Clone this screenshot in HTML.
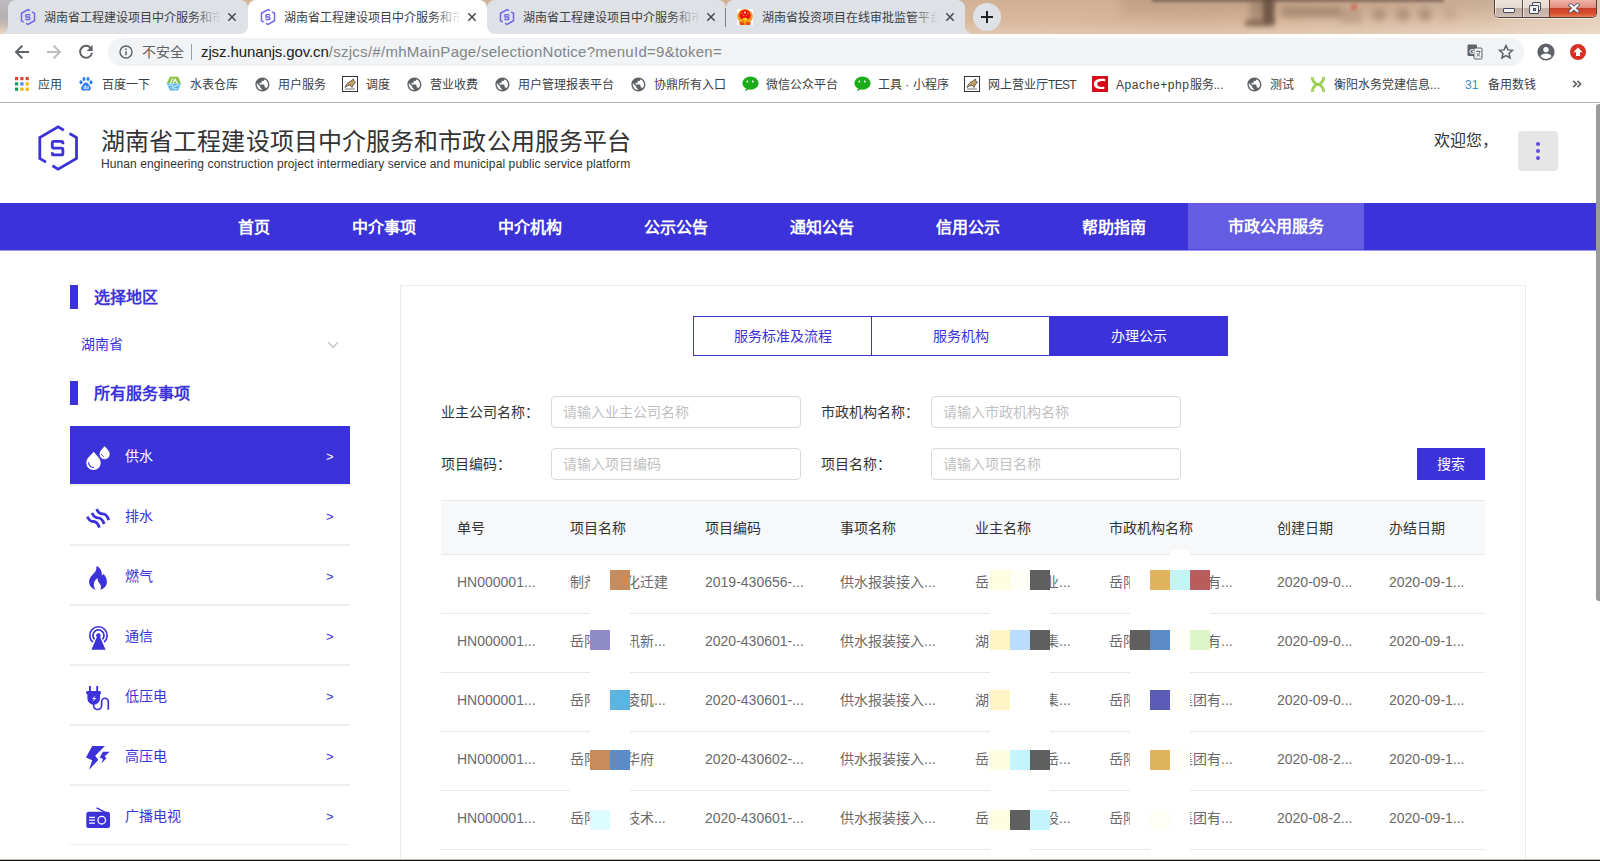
<!DOCTYPE html>
<html lang="zh-CN">
<head>
<meta charset="utf-8">
<title>湖南省工程建设项目中介服务和市政公用服务平台</title>
<style>
*{box-sizing:border-box;margin:0;padding:0}
html,body{width:1600px;height:861px;overflow:hidden;background:#fff}
body{font-family:"Liberation Sans",sans-serif;font-size:14px;color:#333;position:relative}
.abs{position:absolute}
.t{position:absolute;white-space:nowrap;line-height:20px;height:20px}
/* ---------- browser chrome ---------- */
#tabstrip{position:absolute;left:0;top:0;width:1600px;height:34px;background:linear-gradient(90deg,#b9b2ae 0,#cdb9a8 14px,#dcbfa6 60px,#d9b89c 400px,#d8b79b 1000px,#d6b498 1200px,#dcbda3 1400px,#e6cfba 1600px);overflow:hidden}
#tabstrip:before{content:'';position:absolute;left:0;top:0;width:1600px;height:34px;background:linear-gradient(180deg,rgba(0,0,0,.03),rgba(255,255,255,0) 55%,rgba(255,255,255,.22))}
.tab{position:absolute;top:0;height:34px;background:#dee1e6;border-radius:8px 8px 0 0}
.tab.on{background:#fff}
.tab .tt{position:absolute;left:36px;top:8px;line-height:20px;font-size:12px;color:#3c4043;white-space:nowrap;width:178px;overflow:hidden}
.tab .fade{position:absolute;left:184px;top:4px;width:32px;height:26px;background:linear-gradient(90deg,rgba(222,225,230,0),#dee1e6 90%)}
.tab.on .fade{background:linear-gradient(90deg,rgba(255,255,255,0),#fff 90%)}
.tab svg.fav{position:absolute;left:12px;top:8px}
.tab svg.x{position:absolute;left:218px;top:11px}
#toolbar{position:absolute;left:0;top:34px;width:1600px;height:34px;background:#fff}
#omni{position:absolute;left:108px;top:4px;width:1416px;height:28px;border-radius:14px;background:#f1f3f4}
#bm{position:absolute;left:0;top:68px;width:1600px;height:34px;background:#fff}
#bm .b{position:absolute;top:7px;line-height:20px;font-size:12px;color:#3c4043;white-space:nowrap}
#bm svg{position:absolute;top:8px}
#chromeline{position:absolute;left:0;top:102px;width:1600px;height:1px;background:#b6b6b6}
/* ---------- page ---------- */
#page{position:absolute;left:0;top:103px;width:1596px;height:756px;background:#fff;overflow:hidden}
#sbar{position:absolute;left:1596px;top:104px;width:8px;height:496.5px;background:#9b9b9b;border-radius:3px}
#bottom{position:absolute;left:0;top:859px;width:1600px;height:1px;background:#cbbdb2}
#bottom2{position:absolute;left:0;top:860px;width:1600px;height:1px;background:#120d0a}
#nav{position:absolute;left:0;top:100px;width:1596px;height:48px;background:#3b32d9;overflow:hidden}
#nav .n{position:absolute;top:0;height:48px;line-height:50px;text-align:center;color:#fff;font-size:16px;font-weight:bold;white-space:nowrap}
#nav .n.on{background:#655de1;height:46px;line-height:48px}
.bar{position:absolute;left:70px;width:8px;height:24px;background:#3b32d9}
.h{position:absolute;left:94px;font-size:16px;font-weight:bold;color:#3b32d9;line-height:24px;margin-top:1px;white-space:nowrap}
.it{position:absolute;left:70px;width:280px;height:60px;border-bottom:2px solid #eee;color:#3b32d9}
.it.on{background:#3b32d9;color:#fff;border-bottom:2px solid #f1f1ec}
.it .l{position:absolute;left:55px;top:20px;line-height:20px;font-size:14px;white-space:nowrap}
.it .g{position:absolute;left:256px;top:21px;line-height:20px;font-size:13px}
.it svg{position:absolute;left:14px;top:17px}
#panel{position:absolute;left:400px;top:182px;width:1126px;height:700px;border:1px solid #ededed;background:#fff}
.tb{position:absolute;top:213px;height:40px;border:1px solid #3b32d9;color:#3b32d9;font-size:14px;line-height:38px;text-align:center;background:#fff}
.tb.on{background:#3b32d9;color:#fff}
.lb{position:absolute;line-height:20px;font-size:14px;color:#333;white-space:nowrap}
.in{position:absolute;width:250px;height:32px;border:1px solid #d9d9d9;border-radius:4px;background:#fff;color:#bfbfbf;font-size:14px;line-height:30px;padding-left:11px;white-space:nowrap}
#btn{position:absolute;left:1417px;top:345px;width:68px;height:32px;background:#3b32d9;color:#fff;font-size:14px;line-height:32px;text-align:center}
#thead{position:absolute;left:441px;top:397px;width:1044px;height:55px;background:#f7f8fa;border-top:1px solid #e8e8e8;border-bottom:1px solid #e8e8e8}
.th{position:absolute;top:415px;line-height:20px;font-size:14px;color:#333;white-space:nowrap}
.row{position:absolute;left:441px;width:1044px;height:59px;border-bottom:1px solid #e8e8e8}
.td{position:absolute;line-height:20px;font-size:14px;color:#6a6a6a;white-space:nowrap}
.m{position:absolute;width:20px;height:20px}
</style>
</head>
<body>
<div id="tabstrip">
<div class="abs" style="left:1120px;top:-6px;width:380px;height:30px;background:linear-gradient(180deg,rgba(130,98,76,.26),rgba(130,98,76,.12) 60%,rgba(130,98,76,0));filter:blur(6px)"></div>
<div class="abs" style="left:1152px;top:-2.5px;width:292px;height:4.5px;background:#5e4a3f;filter:blur(1.5px);opacity:.62"></div>
<div class="abs" style="left:1250px;top:-3px;width:24px;height:27px;background:#7a5f4c;filter:blur(3px);opacity:.4"></div>
<div class="abs" style="left:1263px;top:-3px;width:11px;height:26px;background:#5f4838;filter:blur(2px);opacity:.75"></div>
<div class="abs" style="left:1245px;top:20px;width:29px;height:6px;background:#6e5542;filter:blur(2.5px);opacity:.7"></div>
<div class="abs" style="left:1282px;top:7px;width:60px;height:10px;background:#856a59;filter:blur(3px);opacity:.5"></div>
<div class="abs" style="left:1340px;top:9px;width:22px;height:14px;background:#a08573;filter:blur(3px);opacity:.4"></div>
<div class="abs" style="left:1372px;top:8px;width:14px;height:13px;border-radius:7px;background:#8f7462;filter:blur(3px);opacity:.5"></div>
<div class="abs" style="left:1396px;top:8px;width:14px;height:13px;border-radius:7px;background:#8f7462;filter:blur(3px);opacity:.5"></div>
<div class="abs" style="left:1418px;top:8px;width:14px;height:13px;border-radius:7px;background:#8f7462;filter:blur(3px);opacity:.5"></div>
<div class="abs" style="left:1444px;top:8px;width:12px;height:12px;background:#a58a78;filter:blur(3px);opacity:.3"></div>
<div class="abs" style="left:1351px;top:4px;width:6px;height:6px;background:#d0604e;filter:blur(1.6px);opacity:.65"></div>
<div class="abs" style="left:0;top:0;width:12px;height:34px;background:linear-gradient(180deg,#bdbabd,#b6b1b3 50%,#c6bab3 72%,#ecd6c3 100%)"></div>
<div class="abs" style="left:0;top:26px;width:8px;height:8px;background:radial-gradient(circle at 0 0,rgba(222,225,230,0) 7.6px,#dee1e6 8.3px)"></div>
<div class="abs" style="left:965px;top:26px;width:8px;height:8px;background:radial-gradient(circle at 100% 0,rgba(222,225,230,0) 7.6px,#dee1e6 8.3px)"></div>
<div class="abs" style="left:238px;top:24px;width:260px;height:10px;background:#fff"></div>
<div class="tab" style="left:8px;width:240px;border-radius:8px 8px 8px 0"><svg class="fav" width="16" height="18" viewBox="35.65 122.7 45 50.6"><path d="M63.84 130.17L58.15 126.9L39.8 137.45L39.8 158.55L46.04 162.14M52.46 165.83L58.15 169.1L76.5 158.55L76.5 137.45L69.53 133.44" fill="none" stroke="#6f67e8" stroke-width="4.2"/><path d="M62.9 144.2V142.9a1.5 1.5 0 0 0-1.5-1.5H53.8a1.5 1.5 0 0 0-1.5 1.5V146.7a1.5 1.5 0 0 0 1.5 1.5H61.4a1.5 1.5 0 0 1 1.5 1.5V153.4a1.5 1.5 0 0 1-1.5 1.5H53.8a1.5 1.5 0 0 1-1.5-1.5V152.2" fill="none" stroke="#6f67e8" stroke-width="4"/></svg><div class="tt">湖南省工程建设项目中介服务和市政公用服务平台</div><div class="fade"></div><svg class="x" width="12" height="12" viewBox="0 0 12 12"><path d="M2.3 2.3l7.4 7.4M9.7 2.3l-7.4 7.4" stroke="#45494d" stroke-width="1.5" fill="none"/></svg></div>
<div class="tab on" style="left:248px;width:239px"><svg class="fav" width="16" height="18" viewBox="35.65 122.7 45 50.6"><path d="M63.84 130.17L58.15 126.9L39.8 137.45L39.8 158.55L46.04 162.14M52.46 165.83L58.15 169.1L76.5 158.55L76.5 137.45L69.53 133.44" fill="none" stroke="#6f67e8" stroke-width="4.2"/><path d="M62.9 144.2V142.9a1.5 1.5 0 0 0-1.5-1.5H53.8a1.5 1.5 0 0 0-1.5 1.5V146.7a1.5 1.5 0 0 0 1.5 1.5H61.4a1.5 1.5 0 0 1 1.5 1.5V153.4a1.5 1.5 0 0 1-1.5 1.5H53.8a1.5 1.5 0 0 1-1.5-1.5V152.2" fill="none" stroke="#6f67e8" stroke-width="4"/></svg><div class="tt">湖南省工程建设项目中介服务和市政公用服务平台</div><div class="fade"></div><svg class="x" width="12" height="12" viewBox="0 0 12 12"><path d="M2.3 2.3l7.4 7.4M9.7 2.3l-7.4 7.4" stroke="#45494d" stroke-width="1.5" fill="none"/></svg></div>
<div class="tab" style="left:487px;width:239px;border-radius:8px 8px 0 8px"><svg class="fav" width="16" height="18" viewBox="35.65 122.7 45 50.6"><path d="M63.84 130.17L58.15 126.9L39.8 137.45L39.8 158.55L46.04 162.14M52.46 165.83L58.15 169.1L76.5 158.55L76.5 137.45L69.53 133.44" fill="none" stroke="#6f67e8" stroke-width="4.2"/><path d="M62.9 144.2V142.9a1.5 1.5 0 0 0-1.5-1.5H53.8a1.5 1.5 0 0 0-1.5 1.5V146.7a1.5 1.5 0 0 0 1.5 1.5H61.4a1.5 1.5 0 0 1 1.5 1.5V153.4a1.5 1.5 0 0 1-1.5 1.5H53.8a1.5 1.5 0 0 1-1.5-1.5V152.2" fill="none" stroke="#6f67e8" stroke-width="4"/></svg><div class="tt">湖南省工程建设项目中介服务和市政公用服务平台</div><div class="fade"></div><svg class="x" width="12" height="12" viewBox="0 0 12 12"><path d="M2.3 2.3l7.4 7.4M9.7 2.3l-7.4 7.4" stroke="#45494d" stroke-width="1.5" fill="none"/></svg></div>
<div class="tab" style="left:726px;width:239px"><svg class="fav" style="left:11px;top:9px" width="16" height="16" viewBox="0 0 16 16"><rect width="16" height="16" fill="#fff"/><ellipse cx="8" cy="7.4" rx="7.8" ry="7.4" fill="#f4981c"/><circle cx="8" cy="6.3" r="5.5" fill="#f20d0d"/><circle cx="8" cy="3.5" r="1.05" fill="#ffe98a"/><circle cx="4.9" cy="4.7" r=".6" fill="#f6b85a"/><circle cx="11.1" cy="4.7" r=".6" fill="#f6b85a"/><circle cx="6.7" cy="6.5" r=".55" fill="#f6c04a"/><circle cx="9.3" cy="6.5" r=".55" fill="#f6c04a"/><path d="M2.6 8.5C4.5 11 6 10 8 9.3c2 .7 3.5 1.7 5.4-.8 1 2.5-.4 5-1.4 5.5H4C3 14 1.6 11 2.6 8.5z" fill="#f6a21a"/><ellipse cx="8" cy="10.1" rx="2.2" ry="1.3" fill="#f9d616"/><path d="M2.2 13.2C5 12.3 6.5 14 8 13.4c1.5.6 3-1.1 5.8-.2L13 16H3z" fill="#e94a12"/><path d="M7.2 11.5h1.6V16H7.2z" fill="#f5a314"/><rect x="5.6" y="11.4" width="1.2" height="1.2" fill="#ea5a14"/><rect x="9.2" y="11.6" width="1.3" height=".9" fill="#ea5a14"/></svg><div class="tt">湖南省投资项目在线审批监管平台</div><div class="fade"></div><svg class="x" width="12" height="12" viewBox="0 0 12 12"><path d="M2.3 2.3l7.4 7.4M9.7 2.3l-7.4 7.4" stroke="#45494d" stroke-width="1.5" fill="none"/></svg></div>
<div class="abs" style="left:725px;top:8px;width:1px;height:19px;background:#7d8187"></div>
<div class="abs" style="left:973px;top:3px;width:28px;height:28px;border-radius:14px;background:#dee1e6"></div>
<svg class="abs" style="left:980px;top:10px" width="14" height="14" viewBox="0 0 14 14"><path d="M7 1v12M1 7h12" stroke="#202124" stroke-width="2"/></svg>
<div class="abs" style="left:1494px;top:0;width:103px;height:18px;border:1px solid #4f4340;border-top:none;border-radius:0 0 5px 5px;overflow:hidden;background:#e3cdbc;box-shadow:0 1px 0 rgba(255,255,255,.5)">
<div class="abs" style="left:0;top:0;width:28px;height:18px;background:linear-gradient(180deg,#ece2da,#e6d9cf 44%,#c3b0a3 47%,#c9b8ac 80%,#d8c8bc);border-right:1px solid #5a4d48;box-shadow:inset 1px 0 0 rgba(255,255,255,.6)"></div>
<div class="abs" style="left:28px;top:0;width:27px;height:18px;background:linear-gradient(180deg,#ece2da,#e6d9cf 44%,#c3b0a3 47%,#c9b8ac 80%,#d8c8bc);border-right:1px solid #7a3326;box-shadow:inset 1px 0 0 rgba(255,255,255,.6)"></div>
<div class="abs" style="left:55px;top:0;width:48px;height:18px;background:linear-gradient(180deg,#f0b3a6,#e08f80 42%,#c8412a 47%,#d8502f 75%,#e88a6a)"></div>
<div class="abs" style="left:8px;top:8px;width:12px;height:5px;background:#f4f1ee;border:1px solid #454a63;border-radius:1px"></div>
<div class="abs" style="left:37px;top:2px;width:9px;height:9px;background:#f4f1ee;border:1px solid #454a63;border-radius:1px"></div>
<div class="abs" style="left:34px;top:5px;width:10px;height:9px;background:#f4f1ee;border:1px solid #454a63;border-radius:1px"></div>
<div class="abs" style="left:37.5px;top:8px;width:3px;height:3px;background:#c9b8ac;border:.5px solid #454a63"></div>
<svg class="abs" style="left:73px;top:2.5px" width="12" height="10.3" viewBox="0 0 14 12"><path d="M3 2.5l8 7M11 2.5l-8 7" stroke="#454a63" stroke-width="4.4" stroke-linecap="square"/><path d="M3 2.5l8 7M11 2.5l-8 7" stroke="#f6f3f1" stroke-width="2.6" stroke-linecap="square"/></svg>
</div>
</div>
<div id="toolbar">
<svg class="abs" style="left:14px;top:10px" width="16" height="16" viewBox="0 0 16 16"><path d="M15 8H2.5M8.3 1.7 2 8l6.3 6.3" fill="none" stroke="#5f6368" stroke-width="2"/></svg>
<svg class="abs" style="left:46px;top:10px" width="16" height="16" viewBox="0 0 16 16"><path d="M1 8h12.5M7.7 1.7 14 8l-6.3 6.3" fill="none" stroke="#babcbe" stroke-width="2"/></svg>
<svg class="abs" style="left:78px;top:10px" width="16" height="16" viewBox="0 0 16 16"><path d="M13.2 4.6A6 6 0 1 0 14 8.9" fill="none" stroke="#5f6368" stroke-width="2"/><path d="M14.6 1v6H8.6z" fill="#5f6368"/></svg>
<div id="omni">
<svg class="abs" style="left:11px;top:7px" width="14" height="14" viewBox="0 0 14 14"><circle cx="7" cy="7" r="6" fill="none" stroke="#5f6368" stroke-width="1.4"/><path d="M7 6.2v4M7 3.6v1.5" stroke="#5f6368" stroke-width="1.5"/></svg>
<div class="t" style="left:34px;top:4px;font-size:14px;color:#5f6368">不安全</div>
<div class="abs" style="left:83px;top:6px;width:1px;height:16px;background:#9aa0a6"></div>
<div class="t" id="url" style="left:93px;top:4px;font-size:15px;color:#80868b;letter-spacing:.272px"><span style="color:#202124;letter-spacing:-.108px">zjsz.hunanjs.gov.cn</span>/szjcs/#/mhMainPage/selectionNotice?menuId=9&amp;token=</div>
<svg class="abs" style="left:1359px;top:6px" width="16" height="16" viewBox="0 0 16 16"><rect x="0.5" y="0.5" width="9.5" height="11.5" rx="1" fill="#5f6368"/><rect x="7" y="4" width="8" height="11" rx="1" fill="#f1f3f4" stroke="#5f6368" stroke-width="1"/><text x="5" y="9.5" font-size="7" font-weight="bold" fill="#f1f3f4" text-anchor="middle" font-family="Liberation Sans,sans-serif">G</text><path d="M9 7.5h4.5M11.2 6.5v1M9.6 12.5c1.8-1 3-2.6 3.2-4.6M10 9c.6 1.6 1.6 2.6 3.4 3.4" stroke="#5f6368" stroke-width=".9" fill="none"/></svg>
<svg class="abs" style="left:1390px;top:6px" width="16" height="16" viewBox="0 0 16 16"><path d="M8 1.6l1.9 4.3 4.7.4-3.6 3.1 1.1 4.6L8 11.6 3.9 14l1.1-4.6L1.4 6.3l4.7-.4z" fill="none" stroke="#5f6368" stroke-width="1.5" stroke-linejoin="miter"/></svg>
</div>
<svg class="abs" style="left:1537px;top:9px" width="18" height="18" viewBox="0 0 18 18"><circle cx="9" cy="9" r="8.6" fill="#5f6368"/><circle cx="9" cy="6.6" r="2.7" fill="#fff"/><path d="M3.4 13.3c1-1.8 3.2-2.7 5.6-2.7s4.6.9 5.6 2.7A7 7 0 0 1 9 16a7 7 0 0 1-5.6-2.7z" fill="#fff"/></svg>
<svg class="abs" style="left:1570px;top:10px" width="16" height="16" viewBox="0 0 16 16"><circle cx="8" cy="8" r="8" fill="#d93025"/><path d="M8 3.4 12.6 8.2H10V12H6V8.2H3.4z" fill="#fff"/></svg>
</div>
<div id="bm">
<svg style="left:15px;top:9px" width="14" height="14" viewBox="0 0 14 14"><rect x="0" y="0" width="3.2" height="3.2" fill="#db4437"/><rect x="5.3" y="0" width="3.2" height="3.2" fill="#db4437"/><rect x="10.6" y="0" width="3.2" height="3.2" fill="#db4437"/><rect x="0" y="5.3" width="3.2" height="3.2" fill="#0f9d58"/><rect x="5.3" y="5.3" width="3.2" height="3.2" fill="#4285f4"/><rect x="10.6" y="5.3" width="3.2" height="3.2" fill="#f4b400"/><rect x="0" y="10.6" width="3.2" height="3.2" fill="#0f9d58"/><rect x="5.3" y="10.6" width="3.2" height="3.2" fill="#f4b400"/><rect x="10.6" y="10.6" width="3.2" height="3.2" fill="#f4b400"/></svg>
<div class="b" style="left:38px">应用</div>
<svg style="left:78px" width="16" height="16" viewBox="0 0 16 16"><ellipse cx="3" cy="6.3" rx="1.5" ry="2" fill="#2d7df6"/><ellipse cx="6" cy="3" rx="1.5" ry="2.1" fill="#2d7df6"/><ellipse cx="10" cy="3" rx="1.5" ry="2.1" fill="#2d7df6"/><ellipse cx="13" cy="6.3" rx="1.5" ry="2" fill="#2d7df6"/><path d="M8 6.6c2 0 2.6 2 4 3.4 1.4 1.5 1.2 4.4-1.2 4.6-1.2.1-1.8-.4-2.8-.4s-1.6.5-2.8.4C2.8 14.4 2.6 11.5 4 10c1.4-1.4 2-3.4 4-3.4z" fill="#2d7df6"/><text x="8" y="13.4" font-size="4.5" fill="#fff" text-anchor="middle" font-family="Liberation Sans,sans-serif" font-weight="bold">du</text></svg>
<div class="b" style="left:102px">百度一下</div>
<svg style="left:166px" width="16" height="16" viewBox="0 0 16 16"><path d="M3.8.8h8.4L15 7.6H.8z" fill="#8bc34a"/><path d="M.8 7.6H15l-3 7H4z" fill="#5bb8e8"/><path d="M4.3 7.6 6.5 2.5M7 7.6 9 3.2 11.4 7.6" stroke="#fff" stroke-width="1.1" fill="none"/><path d="M2.5 9.6c1.4-1 2.7-1 4 0s2.7 1 4 0 2-.8 3-.2M5 12.3c1-.8 2-.8 3 0s2 .8 3 0" stroke="#fff" stroke-width="1" fill="none"/></svg>
<div class="b" style="left:190px">水表仓库</div>
<svg style="left:254px;top:7.6px;margin-left:-.4px" width="16.8" height="16.8" viewBox="0 0 24 24"><path d="M12 2C6.48 2 2 6.48 2 12s4.48 10 10 10 10-4.48 10-10S17.52 2 12 2zm-1 17.93c-3.95-.49-7-3.85-7-7.93 0-.62.08-1.21.21-1.79L9 15v1c0 1.1.9 2 2 2v1.93zm6.9-2.54c-.26-.81-1-1.39-1.9-1.39h-1v-3c0-.55-.45-1-1-1H8v-2h2c.55 0 1-.45 1-1V7h2c1.1 0 2-.9 2-2v-.41c2.93 1.19 5 4.06 5 7.41 0 2.08-.8 3.97-2.1 5.39z" fill="#5f6368"/></svg>
<div class="b" style="left:278px">用户服务</div>
<svg style="left:342px" width="16" height="16" viewBox="0 0 16 16"><rect x=".5" y=".5" width="15" height="15" fill="#fff" stroke="#333" stroke-width="1"/><path d="M3 11.5c1-3 3-5.5 6-6.5l2.5-2 .5 2.5 1.5 1-2 1.5-1.5 3.5-2-2.5-3 1z" fill="#c8a064" stroke="#333" stroke-width=".7"/><path d="M3 13h10" stroke="#555" stroke-width=".8"/></svg>
<div class="b" style="left:366px">调度</div>
<svg style="left:406px;top:7.6px;margin-left:-.4px" width="16.8" height="16.8" viewBox="0 0 24 24"><path d="M12 2C6.48 2 2 6.48 2 12s4.48 10 10 10 10-4.48 10-10S17.52 2 12 2zm-1 17.93c-3.95-.49-7-3.85-7-7.93 0-.62.08-1.21.21-1.79L9 15v1c0 1.1.9 2 2 2v1.93zm6.9-2.54c-.26-.81-1-1.39-1.9-1.39h-1v-3c0-.55-.45-1-1-1H8v-2h2c.55 0 1-.45 1-1V7h2c1.1 0 2-.9 2-2v-.41c2.93 1.19 5 4.06 5 7.41 0 2.08-.8 3.97-2.1 5.39z" fill="#5f6368"/></svg>
<div class="b" style="left:430px">营业收费</div>
<svg style="left:494px;top:7.6px;margin-left:-.4px" width="16.8" height="16.8" viewBox="0 0 24 24"><path d="M12 2C6.48 2 2 6.48 2 12s4.48 10 10 10 10-4.48 10-10S17.52 2 12 2zm-1 17.93c-3.95-.49-7-3.85-7-7.93 0-.62.08-1.21.21-1.79L9 15v1c0 1.1.9 2 2 2v1.93zm6.9-2.54c-.26-.81-1-1.39-1.9-1.39h-1v-3c0-.55-.45-1-1-1H8v-2h2c.55 0 1-.45 1-1V7h2c1.1 0 2-.9 2-2v-.41c2.93 1.19 5 4.06 5 7.41 0 2.08-.8 3.97-2.1 5.39z" fill="#5f6368"/></svg>
<div class="b" style="left:518px">用户管理报表平台</div>
<svg style="left:630px;top:7.6px;margin-left:-.4px" width="16.8" height="16.8" viewBox="0 0 24 24"><path d="M12 2C6.48 2 2 6.48 2 12s4.48 10 10 10 10-4.48 10-10S17.52 2 12 2zm-1 17.93c-3.95-.49-7-3.85-7-7.93 0-.62.08-1.21.21-1.79L9 15v1c0 1.1.9 2 2 2v1.93zm6.9-2.54c-.26-.81-1-1.39-1.9-1.39h-1v-3c0-.55-.45-1-1-1H8v-2h2c.55 0 1-.45 1-1V7h2c1.1 0 2-.9 2-2v-.41c2.93 1.19 5 4.06 5 7.41 0 2.08-.8 3.97-2.1 5.39z" fill="#5f6368"/></svg>
<div class="b" style="left:654px">协鼎所有入口</div>
<svg style="left:742px" width="17" height="16" viewBox="0 0 17 16"><ellipse cx="8.5" cy="7.2" rx="8" ry="6.6" fill="#1aad19"/><path d="M4.3 12.2 2.6 15.2l3.8-1.6z" fill="#1aad19"/><circle cx="5.3" cy="5.5" r=".95" fill="#fff"/><circle cx="10.8" cy="5.5" r=".95" fill="#fff"/></svg>
<div class="b" style="left:766px">微信公众平台</div>
<svg style="left:854px" width="17" height="16" viewBox="0 0 17 16"><ellipse cx="8.5" cy="7.2" rx="8" ry="6.6" fill="#1aad19"/><path d="M4.3 12.2 2.6 15.2l3.8-1.6z" fill="#1aad19"/><circle cx="5.3" cy="5.5" r=".95" fill="#fff"/><circle cx="10.8" cy="5.5" r=".95" fill="#fff"/></svg>
<div class="b" style="left:878px">工具 · 小程序</div>
<svg style="left:964px" width="16" height="16" viewBox="0 0 16 16"><rect x=".5" y=".5" width="15" height="15" fill="#fff" stroke="#333" stroke-width="1"/><path d="M3 11.5c1-3 3-5.5 6-6.5l2.5-2 .5 2.5 1.5 1-2 1.5-1.5 3.5-2-2.5-3 1z" fill="#c8a064" stroke="#333" stroke-width=".7"/><path d="M3 13h10" stroke="#555" stroke-width=".8"/></svg>
<div class="b" style="left:988px">网上营业厅<span style="letter-spacing:-.7px">TEST</span></div>
<svg style="left:1092px" width="16" height="16" viewBox="0 0 16 16"><rect width="16" height="16" fill="#d80c18"/><path d="M13.2 3.1C9 2.4 2 3 1.9 8c0 4.6 5.6 5.6 10.4 4.9V10.6C9 11.3 5.2 10.8 5.2 8s4.3-3.3 8-2.6z" fill="#fff"/></svg>
<div class="b" style="left:1116px"><span style="letter-spacing:.58px">Apache+php</span>服务...</div>
<svg style="left:1246px;top:7.6px;margin-left:-.4px" width="16.8" height="16.8" viewBox="0 0 24 24"><path d="M12 2C6.48 2 2 6.48 2 12s4.48 10 10 10 10-4.48 10-10S17.52 2 12 2zm-1 17.93c-3.95-.49-7-3.85-7-7.93 0-.62.08-1.21.21-1.79L9 15v1c0 1.1.9 2 2 2v1.93zm6.9-2.54c-.26-.81-1-1.39-1.9-1.39h-1v-3c0-.55-.45-1-1-1H8v-2h2c.55 0 1-.45 1-1V7h2c1.1 0 2-.9 2-2v-.41c2.93 1.19 5 4.06 5 7.41 0 2.08-.8 3.97-2.1 5.39z" fill="#5f6368"/></svg>
<div class="b" style="left:1270px">测试</div>
<svg style="left:1310px" width="16" height="16" viewBox="0 0 16 16"><path d="M2.3 1c0 3.5 1.2 5.5 4.7 7.4C3.5 10.3 2.3 12.5 2.3 16M13.7 1c0 3.5-1.2 5.5-4.7 7.4 3.5 1.9 4.7 4.1 4.7 7.6M5 8.4h6" stroke="#8cc63f" stroke-width="2.6" fill="none"/><path d="M2.3 1c0 3.5 1.2 5.5 4.7 7.4C3.5 10.3 2.3 12.5 2.3 16M13.7 1c0 3.5-1.2 5.5-4.7 7.4 3.5 1.9 4.7 4.1 4.7 7.6" stroke="#d8efb0" stroke-width=".5" fill="none"/></svg>
<div class="b" style="left:1334px">衡阳水务党建信息...</div>
<div class="b" style="left:1465px;color:#3b8ed0">31</div>
<div class="b" style="left:1488px">备用数钱</div>
<svg style="left:1572px;top:12px" width="10" height="8" viewBox="0 0 10 8"><path d="M1.2 .8l3.2 3.2-3.2 3.2M5.4 .8l3.2 3.2-3.2 3.2" fill="none" stroke="#5f6368" stroke-width="1.7"/></svg>
</div>
<div id="chromeline"></div>
<div id="page">
<svg class="abs" style="left:30px;top:15px" width="60" height="60" viewBox="30 118 60 60"><path d="M63.84 130.17L58.15 126.9L39.8 137.45L39.8 158.55L46.04 162.14M52.46 165.83L58.15 169.1L76.5 158.55L76.5 137.45L69.53 133.44" fill="none" stroke="#3b32d9" stroke-width="2.8"/><path d="M62.9 144.2V142.9a1.5 1.5 0 0 0-1.5-1.5H53.8a1.5 1.5 0 0 0-1.5 1.5V146.7a1.5 1.5 0 0 0 1.5 1.5H61.4a1.5 1.5 0 0 1 1.5 1.5V153.4a1.5 1.5 0 0 1-1.5 1.5H53.8a1.5 1.5 0 0 1-1.5-1.5V152.2" fill="none" stroke="#3b32d9" stroke-width="2.8"/></svg>
<div class="t" id="title" style="left:101px;top:24px;font-size:24px;font-weight:300;line-height:30px;height:30px;color:#333;letter-spacing:.1px">湖南省工程建设项目中介服务和市政公用服务平台</div>
<div class="t" id="sub" style="left:101px;top:53px;font-size:12px;letter-spacing:.1px;line-height:16px;height:16px;color:#333">Hunan engineering construction project intermediary service and municipal public service platform</div>
<div class="t" style="left:1434px;top:28px;font-size:16px;color:#333">欢迎您，</div>
<div class="abs" style="left:1518px;top:28px;width:40px;height:40px;border-radius:4px;background:#e6e6e6"></div>
<div class="abs" style="left:1535.8px;top:38.9px;width:4.4px;height:4.4px;border-radius:2.2px;background:#614fe0"></div>
<div class="abs" style="left:1535.8px;top:45.9px;width:4.4px;height:4.4px;border-radius:2.2px;background:#614fe0"></div>
<div class="abs" style="left:1535.8px;top:52.9px;width:4.4px;height:4.4px;border-radius:2.2px;background:#614fe0"></div>
<div id="nav">
<div class="n" style="left:197px;width:114px">首页</div>
<div class="n" style="left:311px;width:146px">中介事项</div>
<div class="n" style="left:457px;width:146px">中介机构</div>
<div class="n" style="left:603px;width:146px">公示公告</div>
<div class="n" style="left:749px;width:146px">通知公告</div>
<div class="n" style="left:895px;width:146px">信用公示</div>
<div class="n" style="left:1041px;width:146px">帮助指南</div>
<div class="n on" style="left:1188px;width:176px">市政公用服务</div>
<div class="abs" style="left:1188px;top:46px;width:176px;height:1px;background:#5048dd"></div>
<div class="abs" style="left:0;top:47px;width:1596px;height:1px;background:#9d98ec"></div>
</div>
<div class="bar" style="top:182px"></div><div class="h" style="top:182px">选择地区</div>
<div class="t" style="left:81px;top:231px;font-size:14px;color:#3b32d9">湖南省</div>
<svg class="abs" style="left:327px;top:238px" width="12" height="8" viewBox="0 0 12 8"><path d="M1 1l5 5.5L11 1" fill="none" stroke="#c0c4cc" stroke-width="1.2"/></svg>
<div class="bar" style="top:278px"></div><div class="h" style="top:278px">所有服务事项</div>
<div class="it on" style="top:323px"><div class="l">供水</div><div class="g">&gt;</div></div>
<div class="it" style="top:383px"><div class="l">排水</div><div class="g">&gt;</div></div>
<div class="it" style="top:443px"><div class="l">燃气</div><div class="g">&gt;</div></div>
<div class="it" style="top:503px"><div class="l">通信</div><div class="g">&gt;</div></div>
<div class="it" style="top:563px"><div class="l">低压电</div><div class="g">&gt;</div></div>
<div class="it" style="top:623px"><div class="l">高压电</div><div class="g">&gt;</div></div>
<div class="it" style="top:683px;height:59px;border-bottom:1px solid #efefef"><div class="l">广播电视</div><div class="g">&gt;</div></div>
<svg class="abs" style="left:70px;top:323px" width="60" height="420" viewBox="70 426 60 420"><path d="M93.6 451.7C96.5 455.3 100.7 458.4 100.7 462.8A7.2 7.2 0 0 1 86.3 462.8C86.3 458.4 90.7 455.3 93.6 451.7z" fill="#fff"/><path d="M104.6 445.7C106.8 448.5 110.1 450.8 110.1 454.1A5.5 5.5 0 0 1 99.1 454.1C99.1 450.8 102.4 448.5 104.6 445.7z" fill="#fff" stroke="#3b32d9" stroke-width=".8"/><path d="M88.6 462.5a5 5 0 0 0 5 5" fill="none" stroke="#3b32d9" stroke-width="1.1" stroke-linecap="round"/><path d="M101.4 454.3l2.2 2.2" stroke="#3b32d9" stroke-width=".9" stroke-linecap="round"/><path transform="translate(0 0)" d="M87.4 516.6C88.6 520 90.6 521.4 93.4 521.5S98.2 523.8 99.4 527.7" fill="none" stroke="#3b32d9" stroke-width="2.8"/><path transform="translate(4.7 -3.7)" d="M87.4 516.6C88.6 520 90.6 521.4 93.4 521.5S98.2 523.8 99.4 527.7" fill="none" stroke="#3b32d9" stroke-width="2.8"/><path transform="translate(9.3 -7.6)" d="M87.4 516.6C88.6 520 90.6 521.4 93.4 521.5S98.2 523.8 99.4 527.7" fill="none" stroke="#3b32d9" stroke-width="2.8"/><path d="M96.6 566C99.5 567.2 102 570.5 101.9 575.5L103.6 574C106 576.5 107 579.5 106.9 582C106.8 586 104 588.8 100.2 589.7C101.4 587.6 101.2 585.6 99.8 583.8C98.4 582 97.5 580.5 97.5 578C95.5 579.5 93.8 581.8 93.8 584.2C93.8 586.4 94.4 588.2 95.6 589.7C91.8 588.9 89.1 585.8 89.1 581.6C89.1 576 95.5 573.5 96.2 569.5C96.5 568 96.4 567 96.6 566Z" fill="#3b32d9"/><path d="M92.87 642.12A8.7 8.7 0 1 1 104.05 642.12M94.54 639.38A5.55 5.55 0 1 1 102.38 639.38" fill="none" stroke="#3b32d9" stroke-width="1.7"/><path d="M98.46 633.5L105.6 649.7H91.4Z" fill="#3b32d9" stroke="#fff" stroke-width="1.4" paint-order="stroke"/><circle cx="98.46" cy="635.5" r="2.3" fill="#3b32d9"/><path d="M89.9 686v6M97.2 686v6" stroke="#3b32d9" stroke-width="1.9"/><rect x="86" y="691" width="15.1" height="3.4" rx="1.7" fill="#3b32d9"/><path d="M87.4 693.5h12.6v4.9a6.3 6.3 0 0 1-12.6 0z" fill="#3b32d9"/><path d="M95.8 695.6l-3.8 3.1h2.2l-1.9 3 4.2-3.6h-2.3z" fill="#fff"/><path d="M93.6 704V705.5A4 4 0 0 0 101.6 705.5V701.6A3.35 3.35 0 0 1 108.3 701.6V709.7" fill="none" stroke="#3b32d9" stroke-width="1.7"/><path d="M92.2 746H105L95.2 755.7L98.3 759.9L89.1 769.7L92.2 760.2L86 757.4Z" fill="#3b32d9"/><path d="M103 751.8H109.7L104.7 756.3L106.4 758.2L101.4 763.5L103 759.1L99.7 757.4Z" fill="#3b32d9"/><path d="M96.6 807.9L105 812.1" stroke="#3b32d9" stroke-width="1.5"/><rect x="86.3" y="811.8" width="23.7" height="16.2" rx="2.6" fill="#3b32d9"/><circle cx="101.75" cy="820.2" r="3.8" fill="none" stroke="#fff" stroke-width="1.3"/><path d="M89.1 817.3h5.9M89.1 820.2h5.9M89.1 823.1h5.9" stroke="#fff" stroke-width="1.3"/></svg>
<div id="panel"></div>
<div class="tb" style="left:693px;width:179px">服务标准及流程</div>
<div class="tb" style="left:871px;width:179px">服务机构</div>
<div class="tb on" style="left:1049px;width:179px">办理公示</div>
<div class="lb" style="left:441px;top:299px">业主公司名称：</div><div class="in" style="left:551px;top:293px">请输入业主公司名称</div>
<div class="lb" style="left:821px;top:299px">市政机构名称：</div><div class="in" style="left:931px;top:293px">请输入市政机构名称</div>
<div class="lb" style="left:441px;top:351px">项目编码：</div><div class="in" style="left:551px;top:345px">请输入项目编码</div>
<div class="lb" style="left:821px;top:351px">项目名称：</div><div class="in" style="left:931px;top:345px">请输入项目名称</div>
<div id="btn">搜索</div>
<div id="thead"></div>
<div class="th" style="left:457px">单号</div>
<div class="th" style="left:570px">项目名称</div>
<div class="th" style="left:705px">项目编码</div>
<div class="th" style="left:840px">事项名称</div>
<div class="th" style="left:975px">业主名称</div>
<div class="th" style="left:1109px">市政机构名称</div>
<div class="th" style="left:1277px">创建日期</div>
<div class="th" style="left:1389px">办结日期</div>
<div class="row" style="top:452px"></div>
<div class="td" style="left:457px;top:469px">HN000001...</div>
<div class="td" style="left:570px;top:469px">制剂区绿化迁建</div>
<div class="td" style="left:705px;top:469px">2019-430656-...</div>
<div class="td" style="left:840px;top:469px">供水报装接入...</div>
<div class="td" style="left:975px;top:469px">岳阳某某实业...</div>
<div class="td" style="left:1109px;top:469px">岳阳市某某水务有...</div>
<div class="td" style="left:1277px;top:469px">2020-09-0...</div>
<div class="td" style="left:1389px;top:469px">2020-09-1...</div>
<div class="row" style="top:511px"></div>
<div class="td" style="left:457px;top:528px">HN000001...</div>
<div class="td" style="left:570px;top:528px">岳阳某某讯新...</div>
<div class="td" style="left:705px;top:528px">2020-430601-...</div>
<div class="td" style="left:840px;top:528px">供水报装接入...</div>
<div class="td" style="left:975px;top:528px">湖南某某某集...</div>
<div class="td" style="left:1109px;top:528px">岳阳市某某水务有...</div>
<div class="td" style="left:1277px;top:528px">2020-09-0...</div>
<div class="td" style="left:1389px;top:528px">2020-09-1...</div>
<div class="row" style="top:570px"></div>
<div class="td" style="left:457px;top:587px">HN000001...</div>
<div class="td" style="left:570px;top:587px">岳阳某某凌矶...</div>
<div class="td" style="left:705px;top:587px">2020-430601-...</div>
<div class="td" style="left:840px;top:587px">供水报装接入...</div>
<div class="td" style="left:975px;top:587px">湖南某某某集...</div>
<div class="td" style="left:1109px;top:587px">岳阳市某水集团有...</div>
<div class="td" style="left:1277px;top:587px">2020-09-0...</div>
<div class="td" style="left:1389px;top:587px">2020-09-1...</div>
<div class="row" style="top:629px"></div>
<div class="td" style="left:457px;top:646px">HN000001...</div>
<div class="td" style="left:570px;top:646px">岳阳某某华府</div>
<div class="td" style="left:705px;top:646px">2020-430602-...</div>
<div class="td" style="left:840px;top:646px">供水报装接入...</div>
<div class="td" style="left:975px;top:646px">岳阳某某某岳...</div>
<div class="td" style="left:1109px;top:646px">岳阳市某水集团有...</div>
<div class="td" style="left:1277px;top:646px">2020-08-2...</div>
<div class="td" style="left:1389px;top:646px">2020-09-1...</div>
<div class="row" style="top:688px"></div>
<div class="td" style="left:457px;top:705px">HN000001...</div>
<div class="td" style="left:570px;top:705px">岳阳某某技术...</div>
<div class="td" style="left:705px;top:705px">2020-430601-...</div>
<div class="td" style="left:840px;top:705px">供水报装接入...</div>
<div class="td" style="left:975px;top:705px">岳阳某某某设...</div>
<div class="td" style="left:1109px;top:705px">岳阳市某水集团有...</div>
<div class="td" style="left:1277px;top:705px">2020-08-2...</div>
<div class="td" style="left:1389px;top:705px">2020-09-1...</div>
<div class="m" style="left:590px;top:467px;width:40px;height:260px;background:#fff"></div>
<div class="m" style="left:570px;top:687px;width:20px;height:20px;background:#fff"></div>
<div class="m" style="left:990px;top:467px;width:60px;height:260px;background:#fff"></div>
<div class="m" style="left:990px;top:727px;width:40px;height:31px;background:#fff"></div>
<div class="m" style="left:1130px;top:467px;width:80px;height:80px;background:#fff"></div>
<div class="m" style="left:1130px;top:547px;width:60px;height:180px;background:#fff"></div>
<div class="m" style="left:1150px;top:727px;width:40px;height:31px;background:#fff"></div>
<div class="m" style="left:1170px;top:447px;width:20px;height:20px;background:#fff"></div>
<div class="m" style="left:610px;top:467px;width:20px;height:20px;background:#c68c5e"></div>
<div class="m" style="left:590px;top:527px;width:20px;height:20px;background:#908cc8"></div>
<div class="m" style="left:610px;top:587px;width:20px;height:20px;background:#5cb4e0"></div>
<div class="m" style="left:590px;top:647px;width:20px;height:20px;background:#c68c5e"></div>
<div class="m" style="left:610px;top:647px;width:20px;height:20px;background:#5c8cc8"></div>
<div class="m" style="left:590px;top:707px;width:20px;height:20px;background:#dcfcff"></div>
<div class="m" style="left:990px;top:467px;width:20px;height:20px;background:#fffde0"></div>
<div class="m" style="left:1010px;top:467px;width:20px;height:20px;background:#fffef6"></div>
<div class="m" style="left:1030px;top:467px;width:20px;height:20px;background:#5f5f5f"></div>
<div class="m" style="left:990px;top:527px;width:20px;height:20px;background:#fff4c4"></div>
<div class="m" style="left:1010px;top:527px;width:20px;height:20px;background:#badcff"></div>
<div class="m" style="left:1030px;top:527px;width:20px;height:20px;background:#5f5f5f"></div>
<div class="m" style="left:990px;top:587px;width:20px;height:20px;background:#fff4c4"></div>
<div class="m" style="left:990px;top:647px;width:20px;height:20px;background:#fffde0"></div>
<div class="m" style="left:1010px;top:647px;width:20px;height:20px;background:#c4f5ff"></div>
<div class="m" style="left:1030px;top:647px;width:20px;height:20px;background:#5f5f5f"></div>
<div class="m" style="left:990px;top:707px;width:20px;height:20px;background:#fffde0"></div>
<div class="m" style="left:1010px;top:707px;width:20px;height:20px;background:#5f5f5f"></div>
<div class="m" style="left:1030px;top:707px;width:20px;height:20px;background:#c4f5ff"></div>
<div class="m" style="left:1150px;top:467px;width:20px;height:20px;background:#e0b45c"></div>
<div class="m" style="left:1170px;top:467px;width:20px;height:20px;background:#c4f4f5"></div>
<div class="m" style="left:1190px;top:467px;width:20px;height:20px;background:#b85c5c"></div>
<div class="m" style="left:1130px;top:527px;width:20px;height:20px;background:#5f5f5f"></div>
<div class="m" style="left:1150px;top:527px;width:20px;height:20px;background:#5c8cc8"></div>
<div class="m" style="left:1170px;top:527px;width:20px;height:20px;background:#fffef6"></div>
<div class="m" style="left:1190px;top:527px;width:20px;height:20px;background:#dcf5c8"></div>
<div class="m" style="left:1150px;top:587px;width:20px;height:20px;background:#5c5cb8"></div>
<div class="m" style="left:1170px;top:587px;width:20px;height:20px;background:#fffef6"></div>
<div class="m" style="left:1150px;top:647px;width:20px;height:20px;background:#e0b45c"></div>
<div class="m" style="left:1170px;top:647px;width:20px;height:20px;background:#fffef6"></div>
<div class="m" style="left:1150px;top:707px;width:20px;height:20px;background:#fffef6"></div>
</div>
<div id="sbar"></div>
<div id="bottom"></div><div id="bottom2"></div>
</body>
</html>
